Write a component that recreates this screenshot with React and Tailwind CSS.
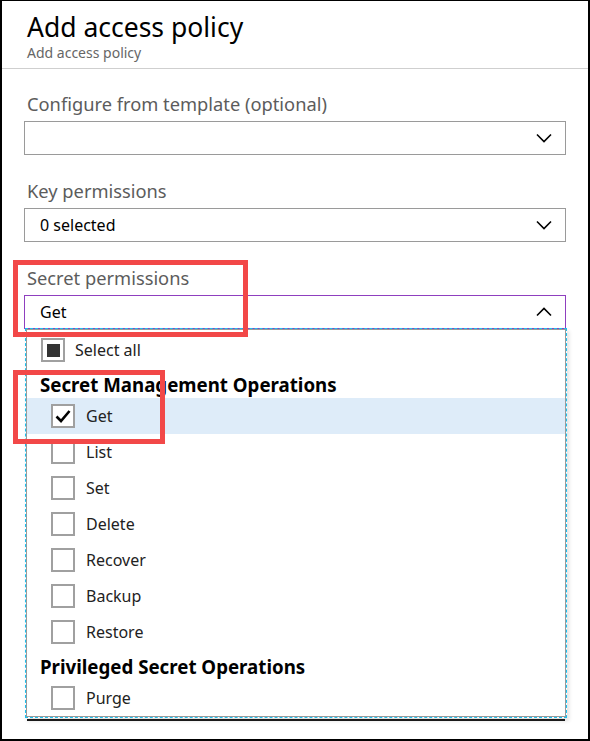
import React from "react";

const Chevron = ({ up }) => (
  <svg width="16" height="10" viewBox="0 0 16 10" className="shrink-0">
    {up ? (
      <path d="M1 8.5 L8 1.5 L15 8.5" fill="none" stroke="#000" strokeWidth="1.6" />
    ) : (
      <path d="M1 1.5 L8 8.5 L15 1.5" fill="none" stroke="#000" strokeWidth="1.6" />
    )}
  </svg>
);

const Box = ({ children }) => (
  <span className="w-[24px] h-[24px] border-2 border-[#a0a0a0] bg-white flex items-center justify-center shrink-0">
    {children}
  </span>
);

const Item = ({ label, checked, highlight }) => (
  <div className={`h-[36px] flex items-center pl-[24px] ${highlight ? "bg-[#deecf9]" : ""}`}>
    <Box>
      {checked && (
        <svg width="18" height="18" viewBox="0 0 18 18">
          <path d="M2.5 9.5 L7 14 L15.5 4" fill="none" stroke="#000" strokeWidth="2.6" />
        </svg>
      )}
    </Box>
    <span className="ml-[11px] text-[16px] text-[#222]">{label}</span>
  </div>
);

const Header = ({ children }) => (
  <div className="h-[30px] pl-[13px] pt-[5px] text-[18.7px] leading-[24px] font-bold text-black whitespace-nowrap">
    {children}
  </div>
);

const Field = ({ label, value, up }) => (
  <div className="flex flex-col">
    <div className="h-[24px] leading-[24px] pl-[3px] text-[18.3px] text-[#5c5c5c]">{label}</div>
    <div className="mt-[5px] h-[34px] border border-[#9a9a9a] flex items-center justify-between pl-[15px] pr-[13px] text-[16px] text-black bg-white">
      <span>{value}</span>
      <Chevron up={up} />
    </div>
  </div>
);

export default function App() {
  return (
    <div className="relative w-[590px] h-[741px] bg-white border-t border-l-2 border-r-2 border-b-2 border-black overflow-hidden font-['Noto_Sans',sans-serif]">
      <div className="h-[67px] pl-[25px] pt-[10px]">
        <div className="text-[26.5px] leading-[32px] text-black">Add access policy</div>
        <div className="mt-[3px] text-[14px] leading-[14px] text-[#666]">Add access policy</div>
      </div>
      <div className="h-px bg-[#cfcfcf]" />
      <div className="px-[22px] pt-[23px] flex flex-col gap-[24px]">
        <Field label="Configure from template (optional)" value="" />
        <Field label="Key permissions" value="0 selected" />
        <div className="flex flex-col">
          <div className="h-[24px] leading-[24px] pl-[3px] text-[18.3px] text-[#5c5c5c]">Secret permissions</div>
          <div className="mt-[5px] h-[34px] border border-[#8f3fbf] flex items-center justify-between pl-[15px] pr-[13px] text-[16px] text-black bg-white">
            <span>Get</span>
            <Chevron up />
          </div>
          <div className="-mt-px ml-px mr-[-1px] border border-dashed border-[#1cc0ee] shadow-[2px_3px_4px_rgba(0,0,0,0.12)]">
            <div className="border border-[#9a9a9a] bg-white pt-[2px]">
              <div className="h-[36px] flex items-center pl-[14px]">
                <Box>
                  <span className="w-[13px] h-[13px] bg-[#333]" />
                </Box>
                <span className="ml-[10px] text-[16px] text-[#222]">Select all</span>
              </div>
              <Header>Secret Management Operations</Header>
              <Item label="Get" checked highlight />
              <Item label="List" />
              <Item label="Set" />
              <Item label="Delete" />
              <Item label="Recover" />
              <Item label="Backup" />
              <Item label="Restore" />
              <Header>Privileged Secret Operations</Header>
              <Item label="Purge" />
            </div>
          </div>
          <div className="mt-px ml-[3px] mr-[1px] h-[2px] bg-[#1a1a1a]" />
        </div>
      </div>
      <div className="absolute left-[11px] top-[259px] w-[235px] h-[77px] border-[5px] border-[#f24848]" />
      <div className="absolute left-[11px] top-[369px] w-[152px] h-[74px] border-[5px] border-[#f24848]" />
    </div>
  );
}
